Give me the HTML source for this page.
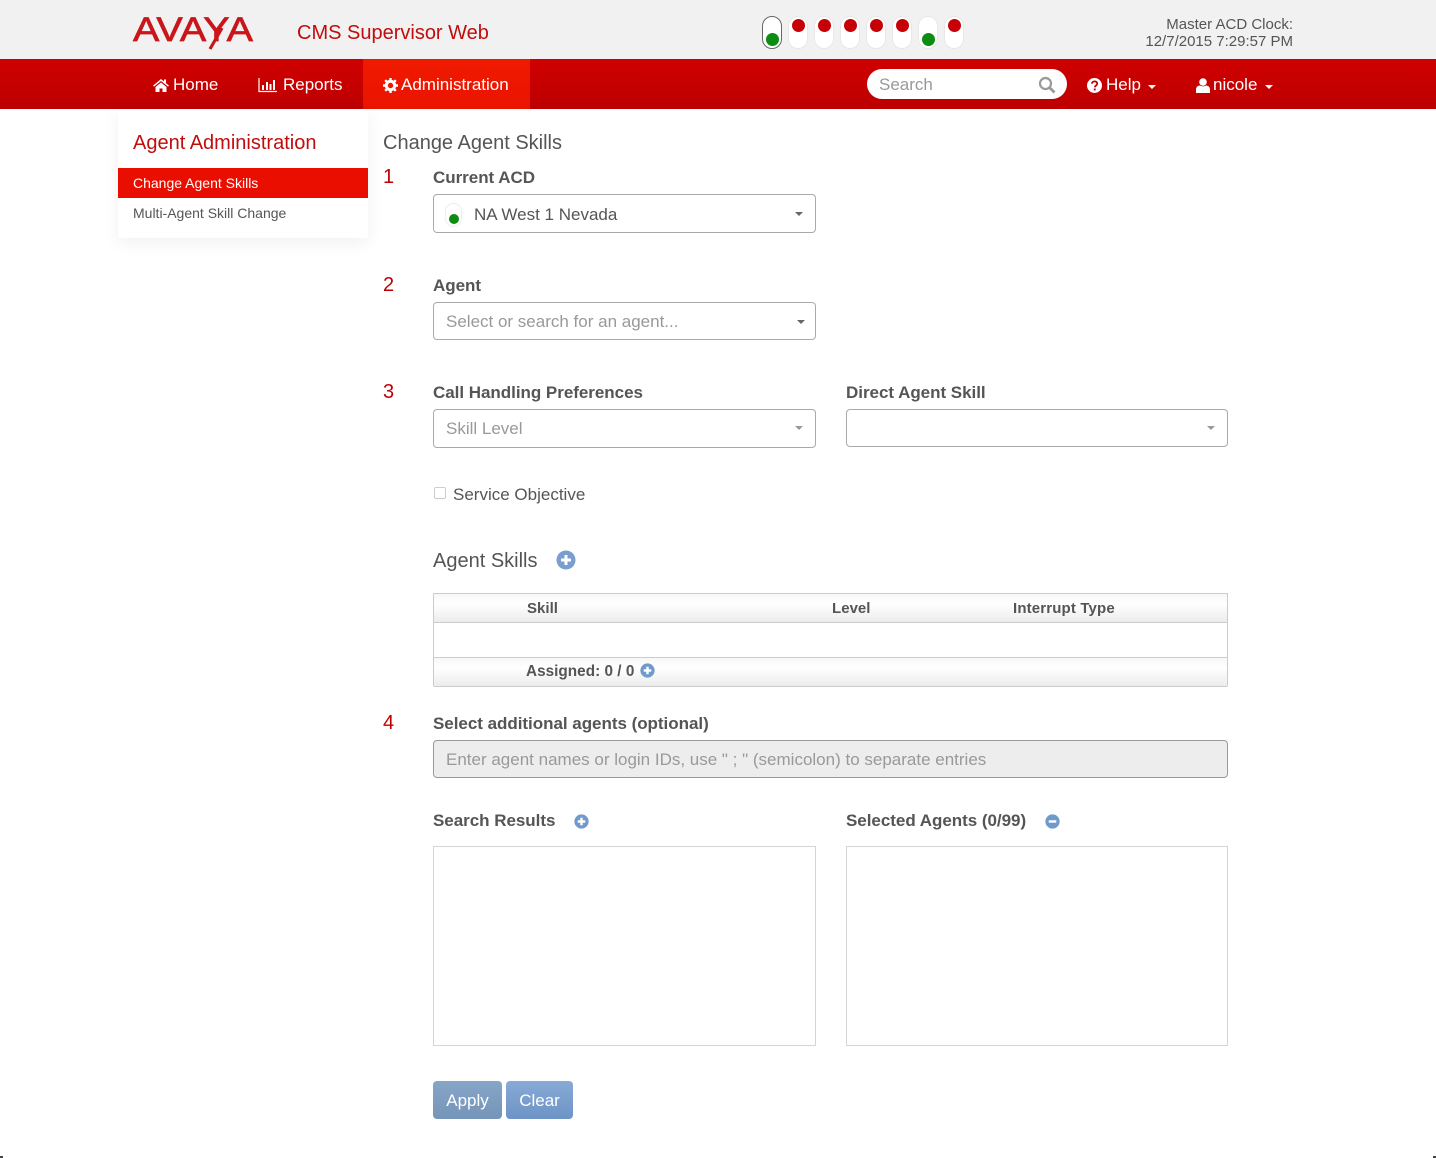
<!DOCTYPE html>
<html><head><meta charset="utf-8"><style>
*{box-sizing:border-box}
html,body{margin:0;padding:0;background:#fff}
body{width:1436px;height:1158px;position:relative;overflow:hidden;font-family:"Liberation Sans",sans-serif;color:#555}
.t{position:absolute;white-space:nowrap;line-height:20px}
.a{position:absolute}
.lb{font-weight:bold;font-size:17px;color:#555;letter-spacing:-.03px}
.num{font-size:20px;color:#c00000}
.box{position:absolute;background:#fff;border:1px solid #aaa;border-radius:4px}
.ph{font-size:17px;color:#999}
.caret{position:absolute;width:0;height:0;border-left:4px solid transparent;border-right:4px solid transparent;border-top:4px solid #777}
.pill{position:absolute;top:16px;width:20px;height:33px;border-radius:10px;background:#fff;border:1px solid #e8e8e8}
.dot{position:absolute;left:3px;width:13px;height:13px;border-radius:50%}
.r{background:#c70008;top:2px}.g{background:#0c8c10;top:16px}
.nav{color:#fff;font-size:17px}
.th{font-weight:bold;font-size:15px;color:#555;letter-spacing:.03px}
.grad{background:linear-gradient(#fafafa,#fff 30%,#e9e9e9)}
</style></head><body>
<div class="a" style="left:0;top:0;width:1436px;height:59px;background:#f1f1f1"></div>
<svg class="a" style="left:130px;top:8px" width="128" height="44" viewBox="0 0 128 44">
<text x="3" y="33" font-family="Liberation Sans" font-size="34" fill="#c8161a" stroke="#c8161a" stroke-width=".7" textLength="120" lengthAdjust="spacingAndGlyphs">AVAYA</text>
<path d="M92 20L80 41" stroke="#c8161a" stroke-width="3.200" fill="none"/>
</svg>
<div class="t" style="left:297px;top:22px;font-size:20px;color:#c00d0d;margin-top:.5px">CMS Supervisor Web</div>

<div class="pill" style="left:762px;border-color:#666"><div class="dot g" style="left:3px"></div></div>
<div class="pill" style="left:788px"><div class="dot r"></div></div>
<div class="pill" style="left:814px"><div class="dot r"></div></div>
<div class="pill" style="left:840px"><div class="dot r"></div></div>
<div class="pill" style="left:866px"><div class="dot r"></div></div>
<div class="pill" style="left:892px"><div class="dot r"></div></div>
<div class="pill" style="left:918px"><div class="dot g"></div></div>
<div class="pill" style="left:944px"><div class="dot r"></div></div>

<div class="t" style="right:143px;top:16px;font-size:15px;color:#555;text-align:right;line-height:17px">Master ACD Clock:<br>12/7/2015 7:29:57 PM</div>

<div class="a" style="left:0;top:59px;width:1436px;height:50px;background:linear-gradient(#cf0000,#bd0000)"></div>
<div class="a" style="left:363px;top:59px;width:167px;height:50px;background:linear-gradient(#f01a00,#ea1400)"></div>

<svg class="a" style="left:153px;top:78px" width="16" height="14" viewBox="0 0 16 14"><path d="M8 1L0 7.6l1 1L8 3l7 5.6 1-1-3-2.500V1.500h-2v2zM2.500 9v5h4v-3.500h3V14h4V9L8 4.500z" fill="#fff"/></svg>
<div class="t nav" style="left:173px;top:75px">Home</div>
<svg class="a" style="left:258px;top:77px" width="20" height="16" viewBox="0 0 20 16"><path d="M1 1v13.500h18" stroke="#fff" stroke-width="1.200" fill="none"/><path d="M4 8h2v5H4zM8 5h2v8H8zM11.500 7h2v6h-2zM15 3h2v10h-2z" fill="#fff"/></svg>
<div class="t nav" style="left:283px;top:75px">Reports</div>
<svg class="a" style="left:383px;top:78px" width="15" height="15" viewBox="0 0 15 15"><circle cx="7.500" cy="7.500" r="4.200" fill="none" stroke="#fff" stroke-width="3"/><path d="M7.500 0v15M0 7.500h15M2.200 2.200l10.600 10.600M12.800 2.200L2.200 12.800" stroke="#fff" stroke-width="2.400" stroke-dasharray="2.600 9.800"/></svg>
<div class="t nav" style="left:401px;top:75px">Administration</div>

<div class="a" style="left:867px;top:69px;width:200px;height:30px;border-radius:15px;background:#fff"></div>
<div class="t" style="left:879px;top:75px;font-size:17px;color:#999">Search</div>
<svg class="a" style="left:1038px;top:76px" width="18" height="18" viewBox="0 0 18 18"><circle cx="7.500" cy="7.500" r="5.500" fill="none" stroke="#999" stroke-width="2.200"/><path d="M11.500 11.500l5 5" stroke="#999" stroke-width="2.800"/></svg>

<svg class="a" style="left:1087px;top:78px" width="15" height="15" viewBox="0 0 15 15"><circle cx="7.500" cy="7.500" r="7.500" fill="#fff"/><path d="M5 5.800c0-3.200 5.200-3.200 5.200-.2 0 2-2.400 2-2.400 3.800" fill="none" stroke="#c00000" stroke-width="1.800"/><rect x="6.800" y="10.500" width="1.900" height="1.900" fill="#c00000"/></svg>
<div class="t nav" style="left:1106px;top:75px">Help</div>
<div class="caret" style="left:1148px;top:85px;border-top-color:#fff"></div>
<svg class="a" style="left:1196px;top:78px" width="14" height="15" viewBox="0 0 14 15"><circle cx="7" cy="4" r="3.800" fill="#fff"/><path d="M0 15v-3.500C0 8.500 2.500 7.500 4 7.500c1.500 1 4.500 1 6 0 1.500 0 4 1 4 4V15z" fill="#fff"/></svg>
<div class="t nav" style="left:1213px;top:75px">nicole</div>
<div class="caret" style="left:1265px;top:85px;border-top-color:#fff"></div>

<div class="a" style="left:118px;top:109px;width:250px;height:129px;background:#fff;box-shadow:0 5px 16px rgba(0,0,0,.06)"></div>
<div class="t" style="left:133px;top:133px;font-size:20px;color:#c00d0d">Agent Administration</div>
<div class="a" style="left:118px;top:168px;width:250px;height:30px;background:#ea0e00"></div>
<div class="t" style="left:133px;top:173px;font-size:14px;color:#fff">Change Agent Skills</div>
<div class="t" style="left:133px;top:203px;font-size:14px;color:#555">Multi-Agent Skill Change</div>

<div class="t" style="left:383px;top:133px;font-size:20px;color:#555">Change Agent Skills</div>

<div class="t num" style="left:383px;top:167px">1</div>
<div class="t lb" style="left:433px;top:168px">Current ACD</div>
<div class="box" style="left:433px;top:194px;width:383px;height:39px"></div>
<div class="a" style="left:445px;top:203px;width:17px;height:24px;border-radius:9px;background:#fff;border:1px solid #eee"></div>
<div class="a" style="left:449px;top:214px;width:10px;height:10px;border-radius:50%;background:#0c8c10"></div>
<div class="t" style="left:474px;top:205px;font-size:17px;color:#555">NA West 1 Nevada</div>
<div class="caret" style="left:795px;top:212px;border-top-color:#666"></div>

<div class="t num" style="left:383px;top:275px">2</div>
<div class="t lb" style="left:433px;top:276px">Agent</div>
<div class="box" style="left:433px;top:302px;width:383px;height:38px"></div>
<div class="t ph" style="left:446px;top:312px">Select or search for an agent...</div>
<div class="caret" style="left:797px;top:320px;border-top-color:#666"></div>

<div class="t num" style="left:383px;top:382px">3</div>
<div class="t lb" style="left:433px;top:383px">Call Handling Preferences</div>
<div class="t lb" style="left:846px;top:383px">Direct Agent Skill</div>
<div class="box" style="left:433px;top:409px;width:383px;height:39px"></div>
<div class="t ph" style="left:446px;top:419px">Skill Level</div>
<div class="caret" style="left:795px;top:426px;border-top-color:#999"></div>
<div class="box" style="left:846px;top:409px;width:382px;height:38px"></div>
<div class="caret" style="left:1207px;top:426px;border-top-color:#999"></div>

<div class="a" style="left:434px;top:487px;width:12px;height:12px;border:1px solid #ccc;border-radius:2px;background:#fff"></div>
<div class="t" style="left:453px;top:485px;font-size:17px;color:#555">Service Objective</div>

<div class="t" style="left:433px;top:551px;font-size:20px;color:#555">Agent Skills</div>
<svg class="a" style="left:556px;top:550px" width="20" height="20" viewBox="0 0 20 20"><circle cx="10" cy="10" r="9.500" fill="#7a9fcf"/><path d="M10 5v10M5 10h10" stroke="#fff" stroke-width="3"/></svg>

<div class="a grad" style="left:433px;top:593px;width:795px;height:94px;border:1px solid #ccc;border-radius:0 0 2px 2px"></div>
<div class="a" style="left:434px;top:622px;width:793px;height:36px;background:#fff;border-top:1px solid #ccc;border-bottom:1px solid #ccc"></div>
<div class="a" style="left:434px;top:594px;width:793px;height:28px;background:linear-gradient(#f7f7f7,#fff 35%,#ececec)"></div>
<div class="a" style="left:434px;top:658px;width:793px;height:28px;background:linear-gradient(#f7f7f7,#fff 35%,#ececec)"></div>
<div class="t th" style="left:527px;top:599px">Skill</div>
<div class="t th" style="left:832px;top:599px">Level</div>
<div class="t th" style="left:1013px;top:599px;letter-spacing:.15px">Interrupt Type</div>
<div class="t th" style="left:526px;top:662px;font-size:15.300px">Assigned: 0 / 0</div>
<svg class="a" style="left:640px;top:663px" width="15" height="15" viewBox="0 0 20 20"><circle cx="10" cy="10" r="9.500" fill="#6f9acb"/><path d="M10 5v10M5 10h10" stroke="#fff" stroke-width="3.200"/></svg>

<div class="t num" style="left:383px;top:713px">4</div>
<div class="t lb" style="left:433px;top:714px">Select additional agents (optional)</div>
<div class="box" style="left:433px;top:740px;width:795px;height:38px;background:#ededed;border-color:#999"></div>
<div class="t ph" style="left:446px;top:750px">Enter agent names or login IDs, use " ; " (semicolon) to separate entries</div>

<div class="t lb" style="left:433px;top:811px">Search Results</div>
<svg class="a" style="left:574px;top:814px" width="15" height="15" viewBox="0 0 20 20"><circle cx="10" cy="10" r="9.500" fill="#6f9acb"/><path d="M10 5v10M5 10h10" stroke="#fff" stroke-width="3.200"/></svg>
<div class="t lb" style="left:846px;top:811px">Selected Agents (0/99)</div>
<svg class="a" style="left:1045px;top:814px" width="15" height="15" viewBox="0 0 20 20"><circle cx="10" cy="10" r="9.500" fill="#6f9acb"/><path d="M5 10h10" stroke="#fff" stroke-width="3.200"/></svg>

<div class="a" style="left:433px;top:846px;width:383px;height:200px;border:1px solid #d5d5d5"></div>
<div class="a" style="left:846px;top:846px;width:382px;height:200px;border:1px solid #d5d5d5"></div>

<div class="a" style="left:433px;top:1081px;width:69px;height:38px;border-radius:4px;background:linear-gradient(#86a5c8,#7595b8);color:#fff;font-size:17px;line-height:40px;text-align:center">Apply</div>
<div class="a" style="left:506px;top:1081px;width:67px;height:38px;border-radius:4px;background:linear-gradient(#88aad6,#6d94c6);color:#fff;font-size:17px;line-height:40px;text-align:center">Clear</div>
<div class="a" style="left:0;top:1156px;width:3px;height:2px;background:#444"></div>
<div class="a" style="right:0;top:1156px;width:3px;height:2px;background:#444"></div>
</body></html>
